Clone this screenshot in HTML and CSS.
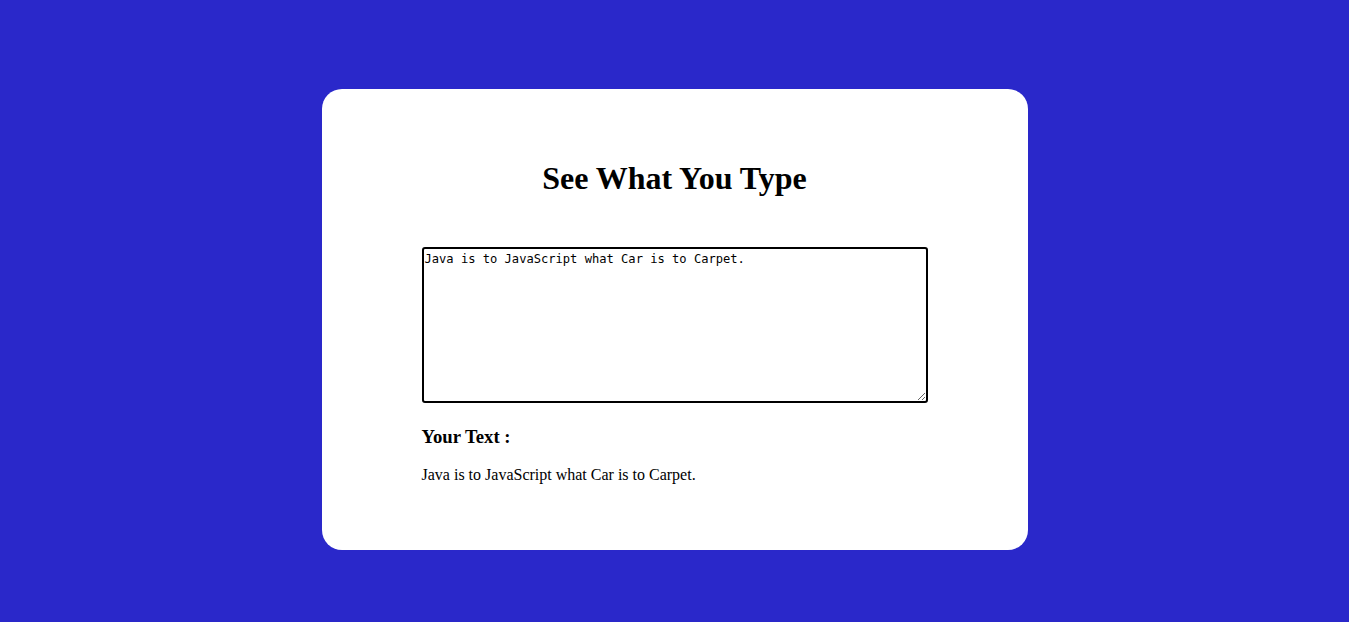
FILE: index.html
```html
<!DOCTYPE html>
<html lang="en">
<head>
<meta charset="utf-8">
<title>See What You Type</title>
<link rel="stylesheet" href="styles.css">
</head>
<body>
<main class="card">
  <h1 class="title">See What You Type</h1>
  <textarea class="input">Java is to JavaScript what Car is to Carpet.</textarea>
  <h3 class="label">Your Text :</h3>
  <p class="output">Java is to JavaScript what Car is to Carpet.</p>
</main>
</body>
</html>
```
FILE: styles.css
```css
html, body {
  margin: 0;
  padding: 0;
}
body {
  background: #2a28ca;
  font-family: "Liberation Serif", "Times New Roman", serif;
  color: #000;
  min-height: 622px;
  padding-top: 89px;
  box-sizing: border-box;
}
.card {
  display: block;
  width: 706px;
  box-sizing: border-box;
  margin: 0 auto;
  background: #fff;
  border-radius: 20px;
  padding: 50px 100px;
}
.title {
  font-size: 32px;
  font-weight: bold;
  text-align: center;
  margin: 21px 0 50px;
}
.input {
  display: inline-block;
  width: 100%;
  height: 156px;
  box-sizing: border-box;
  border: 2px solid #000;
  border-radius: 3px;
  padding: 2px 1px 1px;
  font-family: "DejaVu Sans Mono", "Liberation Mono", monospace;
  font-size: 12.1px;
  line-height: 16px;
  color: #000;
  resize: both;
  margin: 0;
  vertical-align: baseline;
}
.label {
  font-size: 18.72px;
  font-weight: bold;
  margin: 18.72px 0;
}
.output {
  font-size: 16px;
  margin: 16px 0;
}
```
